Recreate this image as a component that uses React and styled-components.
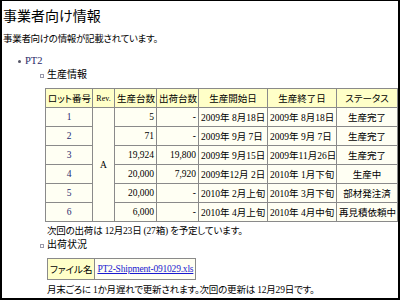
import React from "react";
import styled, { createGlobalStyle } from "styled-components";

const rows = [
  { lot: "1", made: "5", shipped: "-", start: "2009年 8月18日", end: "2009年 8月18日", status: "生産完了" },
  { lot: "2", made: "71", shipped: "-", start: "2009年 9月 7日", end: "2009年 9月 7日", status: "生産完了" },
  { lot: "3", made: "19,924", shipped: "19,800", start: "2009年 9月15日", end: "2009年11月26日", status: "生産完了" },
  { lot: "4", made: "20,000", shipped: "7,920", start: "2009年12月 2日", end: "2010年 1月下旬", status: "生産中" },
  { lot: "5", made: "20,000", shipped: "-", start: "2010年 2月上旬", end: "2010年 3月下旬", status: "部材発注済" },
  { lot: "6", made: "6,000", shipped: "-", start: "2010年 4月上旬", end: "2010年 4月中旬", status: "再見積依頼中" },
];

function App() {
  return (
    <>
      <GlobalStyle />
      <Frame>
        <Title>事業者向け情報</Title>
        <Lead>事業者向けの情報が記載されています。</Lead>
        <List>
          <Item>
            <Product>PT2</Product>
            <SubList>
              <SubItem>
                <Label>生産情報</Label>
                <Table>
                  <colgroup>
                    <col style={{ width: 47 }} />
                    <col style={{ width: 22 }} />
                    <col style={{ width: 42 }} />
                    <col style={{ width: 42 }} />
                    <col style={{ width: 69 }} />
                    <col style={{ width: 69 }} />
                    <col style={{ width: 61 }} />
                  </colgroup>
                  <thead>
                    <tr>
                      <Th>ロット番号</Th>
                      <Th $small>Rev.</Th>
                      <Th>生産台数</Th>
                      <Th>出荷台数</Th>
                      <Th>生産開始日</Th>
                      <Th>生産終了日</Th>
                      <Th>ステータス</Th>
                    </tr>
                  </thead>
                  <tbody>
                    {rows.map((row, index) => (
                      <tr key={row.lot}>
                        <Td $align="center" $lot>{row.lot}</Td>
                        {index === 0 && (
                          <Td $align="center" rowSpan={rows.length}>A</Td>
                        )}
                        <Td $align="right">{row.made}</Td>
                        <Td $align="right">{row.shipped}</Td>
                        <Td>{row.start}</Td>
                        <Td>{row.end}</Td>
                        <Td $align="center">{row.status}</Td>
                      </tr>
                    ))}
                  </tbody>
                </Table>
                <Note>次回の出荷は 12月23日 (27箱) を予定しています。</Note>
              </SubItem>
              <SubItem>
                <Label>出荷状況</Label>
                <FileTable>
                  <tbody>
                    <tr>
                      <Th>ファイル名</Th>
                      <Td>
                        <FileLink href="#">PT2-Shipment-091029.xls</FileLink>
                      </Td>
                    </tr>
                  </tbody>
                </FileTable>
                <Note $gap>月末ごろに 1か月遅れで更新されます。次回の更新は 12月29日です。</Note>
              </SubItem>
            </SubList>
          </Item>
        </List>
      </Frame>
    </>
  );
}

const GlobalStyle = createGlobalStyle`
  html, body {
    margin: 0;
    padding: 0;
    background: #fff;
  }
  body {
    font-family: "Liberation Serif", "Noto Sans CJK JP", serif;
    font-feature-settings: "palt";
    color: #000;
  }
`;

const Frame = styled.div`
  box-sizing: border-box;
  width: 400px;
  height: 300px;
  overflow: hidden;
  border: 2px solid #000;
  border-top-width: 1px;
  padding: 0 0 0 1px;
`;

const Title = styled.h1`
  margin: 5px 0 0;
  font-family: "Noto Sans CJK JP", sans-serif;
  font-size: 14px;
  font-weight: normal;
  line-height: 18px;
`;

const Lead = styled.p`
  margin: 8px 0 0;
  font-size: 9.5px;
  line-height: 14px;
  letter-spacing: -0.3px;
`;

const List = styled.ul`
  margin: 8px 0 0;
  padding: 0 0 0 22px;
  list-style: none;
`;

const Item = styled.li`
  position: relative;
  &::before {
    content: "";
    position: absolute;
    left: -7px;
    top: 6px;
    width: 3px;
    height: 3px;
    background: #556;
    border-radius: 50%;
  }
`;

const Product = styled.div`
  font-size: 10.5px;
  line-height: 14px;
  color: #2a2a6a;
`;

const SubList = styled.ul`
  margin: 0;
  padding: 0 0 0 20px;
  list-style: none;
`;

const SubItem = styled.li`
  position: relative;
  &::before {
    content: "";
    position: absolute;
    left: -5px;
    top: 6px;
    width: 2px;
    height: 2px;
    border: 1px solid #99a;
  }
`;

const Label = styled.div`
  padding-left: 2px;
  font-size: 10px;
  line-height: 14px;
  margin-bottom: 6px;
`;

const Table = styled.table`
  border-collapse: collapse;
  table-layout: fixed;
  width: 352px;
  font-size: 9.5px;
`;

const Th = styled.th`
  height: 18px;
  padding: 0 2px;
  background: #ffffc8;
  border: 1px solid #8a8a8a;
  font-weight: normal;
  white-space: nowrap;
  font-size: ${(p) => (p.$small ? "8px" : "9.5px")};
  text-align: center;
`;

const Td = styled.td`
  height: 18px;
  padding: 0 2px;
  background: #fffff3;
  border: 1px solid #8a8a8a;
  white-space: nowrap;
  overflow: hidden;
  text-align: ${(p) => p.$align || "left"};
  color: ${(p) => (p.$lot ? "#1f2a6e" : "#000")};
`;

const Note = styled.p`
  margin: ${(p) => (p.$gap ? "3px" : "2px")} 0 0;
  padding-left: 2px;
  font-size: 9.5px;
  line-height: 14px;
  letter-spacing: -0.2px;
`;

const FileTable = styled.table`
  border-collapse: collapse;
  font-size: 9.5px;
  margin: 1px 0 0 2px;
  ${Th}, ${Td} {
    height: 20px;
    padding: 0 2px;
  }
`;

const FileLink = styled.a`
  color: #1a1ad0;
  text-decoration: underline;
  font-size: 9.5px;
  letter-spacing: -0.2px;
`;

export default App;
